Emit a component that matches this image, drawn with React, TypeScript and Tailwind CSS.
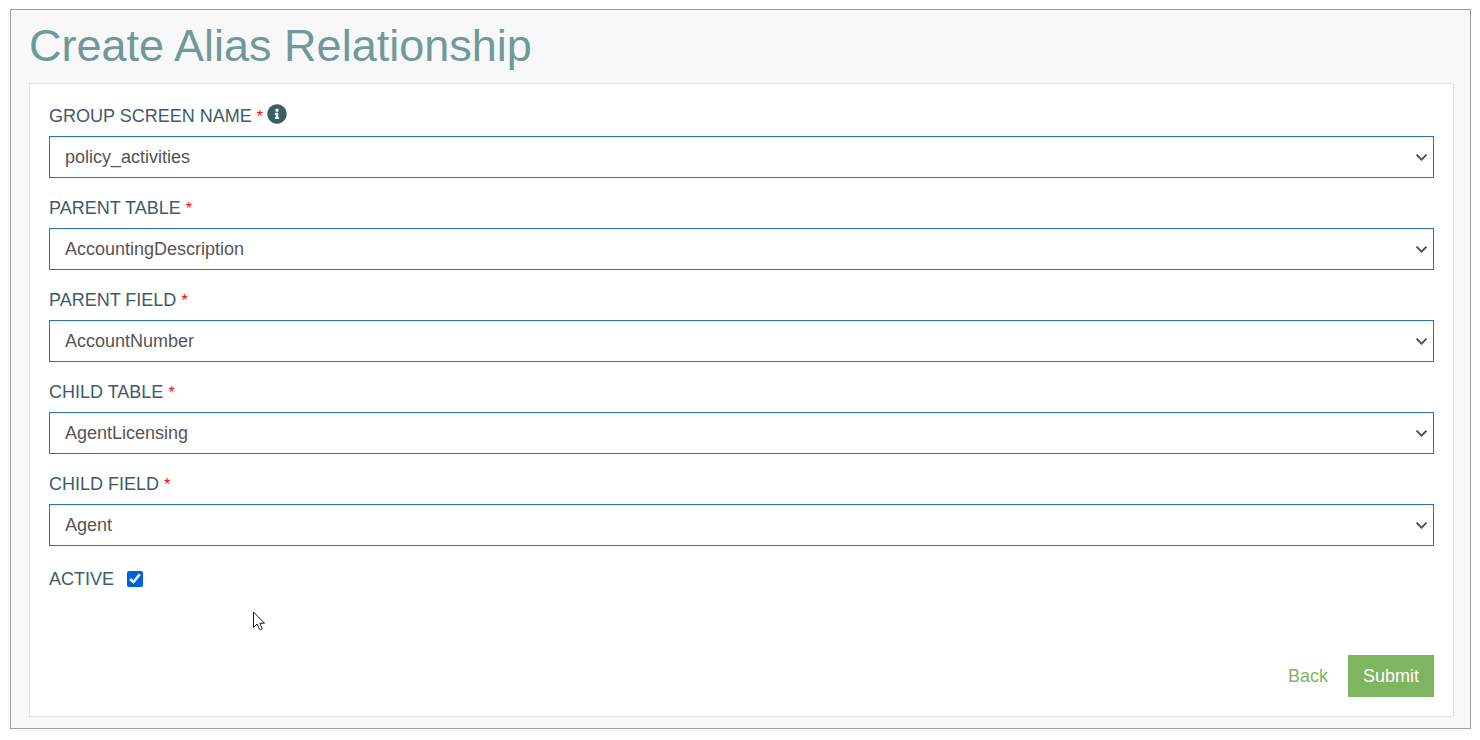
import { useState } from "react";
import { FaInfoCircle } from "react-icons/fa";

type Field = {
  id: string;
  label: string;
  options: string[];
  info?: boolean;
};

const fields: Field[] = [
  { id: "groupScreenName", label: "GROUP SCREEN NAME", options: ["policy_activities"], info: true },
  { id: "parentTable", label: "PARENT TABLE", options: ["AccountingDescription"] },
  { id: "parentField", label: "PARENT FIELD", options: ["AccountNumber"] },
  { id: "childTable", label: "CHILD TABLE", options: ["AgentLicensing"] },
  { id: "childField", label: "CHILD FIELD", options: ["Agent"] },
];

function SelectField({ field }: { field: Field }) {
  return (
    <div>
      <div className="flex h-6 items-center gap-1">
        <label htmlFor={field.id}>
          {field.label} <span className="text-base leading-4 text-[#ff0000]">*</span>
        </label>
        {field.info ? (
          <button type="button" aria-label="More information" className="mb-1">
            <FaInfoCircle size={20} />
          </button>
        ) : null}
      </div>
      <div className="mt-2 grid items-center">
        <select
          id={field.id}
          className="col-start-1 row-start-1 h-[42px] w-full appearance-none border border-[#2f74a3] bg-white pr-8 pb-px pl-[15px] text-[#555555] shadow-[inset_0_1px_1px_rgba(0,0,0,0.075)] outline-none"
        >
          {field.options.map((option) => (
            <option key={option}>{option}</option>
          ))}
        </select>
        <svg
          className="pointer-events-none col-start-1 row-start-1 mr-[7px] h-3 w-3 justify-self-end"
          viewBox="0 0 12 12"
          fill="none"
          stroke="#4d4d4d"
          strokeWidth="1.8"
        >
          <path d="M1.500 3.700 6.500 8.700 11.500 3.700" />
        </svg>
      </div>
    </div>
  );
}

export default function App() {
  const [active, setActive] = useState(true);

  return (
    <main className="pt-[9px] pr-[9px] pb-2 pl-[10px] font-['Liberation_Sans',Arial,sans-serif] text-lg leading-6 text-[#3b5d66]">
      <section className="border border-[#a0a0a0] bg-[#f8f8f8] pt-2 pr-4 pb-[11px] pl-[18px] shadow-[-2px_2px_0_0_#fafafa]">
        <h1 className="text-[45px] leading-[56px] text-[#6f9a9b]">Create Alias Relationship</h1>

        <form
          className="relative mt-[9px] border border-[#e3e3e3] bg-white px-[19px] pt-5 pb-[19px]"
          onSubmit={(e) => e.preventDefault()}
        >
          <div className="flex flex-col gap-[18px]">
            {fields.map((field) => (
              <SelectField key={field.id} field={field} />
            ))}
          </div>

          <div className="mt-[21px] flex items-center gap-[13px]">
            <label htmlFor="active">ACTIVE</label>
            <input
              id="active"
              type="checkbox"
              className="h-4 w-4 accent-[#0060df]"
              checked={active}
              onChange={(e) => setActive(e.target.checked)}
            />
          </div>

          <div className="mt-16 flex items-center justify-end gap-5">
            <a href="#" className="text-[#7eb55f]">
              Back
            </a>
            <button type="submit" className="h-[42px] bg-[#7eb55f] px-[15px] text-white">
              Submit
            </button>
          </div>

          {/* mouse pointer */}
          <svg
            className="pointer-events-none absolute top-[527px] left-[223px] h-5 w-3"
            viewBox="0 0 12 20"
            fill="white"
            stroke="#15151f"
            strokeWidth="1"
          >
            <path d="M.5 1v15.500l3.600-3.500 2.500 5.400c.9.8 2.600.2 2.500-1L6.900 12.200H11.500z" />
          </svg>
        </form>
      </section>
    </main>
  );
}
